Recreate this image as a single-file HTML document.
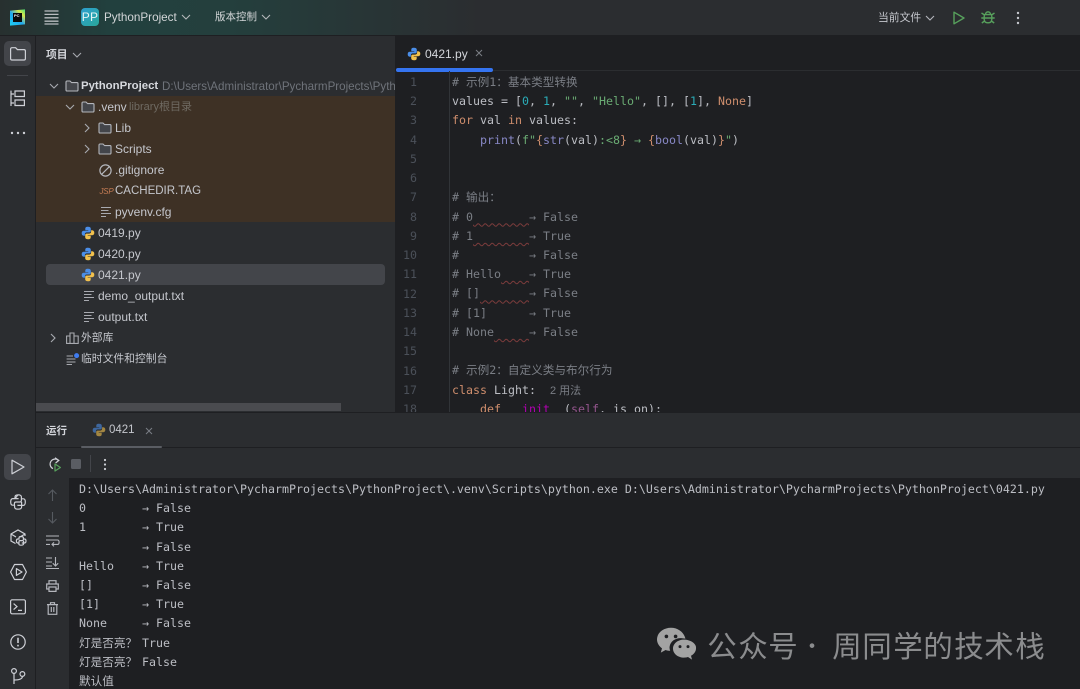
<!DOCTYPE html>
<html><head><meta charset="utf-8">
<style>
html,body{margin:0;padding:0;background:#1e1f22}
#r{position:relative;width:1080px;height:689px;overflow:hidden;background:#1e1f22;font-family:"Liberation Sans","Noto Sans CJK SC",sans-serif;font-size:12px;color:#c5c7cd;filter:blur(.3px)}
.a{position:absolute}
.t{position:absolute;white-space:pre;line-height:21px;height:21px}
svg{position:absolute;overflow:visible;fill:none}
.m{font-family:"DejaVu Sans Mono","Noto Sans CJK SC",monospace;font-size:11.63px;overflow:hidden}
.m div{white-space:pre}
.m i{display:inline-block;width:56px;font-style:normal}
#code div{height:19.23px;line-height:19.23px}
#con div{height:19.2px;line-height:19.2px}
.n{position:absolute;left:396px;width:21px;height:340px;overflow:hidden;text-align:right;color:#4b5059;font-family:"DejaVu Sans Mono",monospace;font-size:11.63px;line-height:19.23px}
.c{color:#7a7e85}.k{color:#cf8e6d}.d{color:#2aacb8}.s{color:#6aab73}.b{color:#8888c6}.x{color:#cf8e6d}
u{text-decoration:underline wavy #7d3c3c 1px;text-underline-offset:2px}
.st{stroke:#ced0d6;stroke-width:1.2}
.w{position:absolute;top:628px;font-size:29.5px;line-height:34px;color:#8b8c8e;font-family:"Noto Sans CJK SC",sans-serif;font-weight:400;width:30px;text-align:center}
</style></head><body>
<svg width="0" height="0" style="position:absolute"><defs>
<symbol id="py" viewBox="0 0 14 14"><path fill="#4b8ee8" d="M7 .8C4.6.8 4.3 1.7 4.3 2.8V4.2H7.3V4.8H2.8C1.4 4.8.7 5.8.7 7.2S1.4 9.7 2.8 9.7H3.9V8.2C3.9 7.1 4.8 6.4 5.7 6.4H8.4C9.2 6.4 9.8 5.8 9.8 5V2.8C9.8 1.6 8.8.8 7 .8Z"/><path fill="#f2c14e" d="M7 13.2C9.4 13.2 9.7 12.3 9.7 11.2V9.8H6.7V9.2H11.2C12.6 9.2 13.3 8.2 13.3 6.8S12.6 4.3 11.2 4.3H10.1V5.8C10.1 6.9 9.2 7.6 8.3 7.6H5.6C4.8 7.6 4.2 8.2 4.2 9V11.2C4.2 12.4 5.2 13.2 7 13.2Z"/></symbol>
<symbol id="fo" viewBox="0 0 14 14"><path stroke="#b4b6bc" stroke-width="1.1" fill="#43454a" d="M1 3.2C1 2.6 1.4 2 2 2H5L6.6 3.6H12C12.6 3.6 13 4 13 4.6V11C13 11.6 12.6 12 12 12H2C1.4 12 1 11.6 1 11Z"/></symbol>
<symbol id="tx" viewBox="0 0 14 14"><path stroke="#a8aab0" stroke-width="1.1" d="M2 2.5H12M2 5.5H9.5M2 8.5H12M2 11.5H7"/></symbol>
</defs></svg>
<div id="r">

<!-- top bar -->
<div class="a" style="left:0;top:0;width:1080px;height:35px;background:linear-gradient(90deg,#27302f 0,#22403e 110px,#243f3d 230px,#2b2d30 480px)"></div>
<div class="a" style="left:0;top:35px;width:1080px;height:1px;background:#1e1f22"></div>
<!-- logo -->
<div class="a" style="left:10px;top:10px;width:15px;height:15px;background:linear-gradient(45deg,#1fd0f0 0,#1fa8f0 45%,#d9e84a 75%,#3fe07a 100%);transform:skewY(-5deg)"></div>
<div class="a" style="left:13px;top:13px;width:9px;height:9px;background:#0a0a0a"></div>
<div class="a" style="left:14px;top:14px;font-size:4px;line-height:4px;color:#fff;font-weight:bold">PC</div>
<!-- menu -->
<svg style="left:44px;top:10px" width="15" height="15"><path stroke="#b9bcc0" stroke-width="1.3" d="M0.5 1H14.5M0.5 4.4H14.5M0.5 7.8H14.5M0.5 11.2H14.5M0.5 14H14.5"/></svg>
<div class="a" style="left:81px;top:8px;width:18px;height:18px;border-radius:4px;background:linear-gradient(135deg,#2d9fd0,#2aa89a);color:#e7f5f5;font-size:12px;line-height:18px;text-align:center;letter-spacing:.3px">PP</div>
<div class="t" style="left:104px;top:7px;color:#d3d6d8;font-size:11.7px">PythonProject</div>
<svg style="left:181px;top:14px" width="10" height="6"><path stroke="#b4b8ba" stroke-width="1.1" d="M1 1L5 5L9 1"/></svg>
<div class="t" style="left:215px;top:7px;color:#d3d6d8;font-size:10.5px">版本控制</div>
<svg style="left:261px;top:14px" width="10" height="6"><path stroke="#b4b8ba" stroke-width="1.1" d="M1 1L5 5L9 1"/></svg>
<div class="t" style="left:878px;top:8px;color:#c5c7cd;font-size:10.8px">当前文件</div>
<svg style="left:925px;top:15px" width="10" height="6"><path stroke="#b4b6bc" stroke-width="1.1" d="M1 1L5 5L9 1"/></svg>
<svg style="left:953px;top:11px" width="12" height="14"><path stroke="#57a05c" stroke-width="1.4" stroke-linejoin="round" d="M1 1.2L11 7L1 12.8Z"/></svg>
<svg style="left:981px;top:10px" width="14" height="15"><path stroke="#57a05c" stroke-width="1.4" d="M4.5 4.5C4.5 1 9.5 1 9.5 4.5M3.6 4.6H10.4C11 6 11 10 10.4 11C9.5 13.4 4.5 13.4 3.6 11C3 10 3 6 3.6 4.6ZM0.5 3L3.5 5M13.5 3L10.5 5M0.3 8H3M13.7 8H11M0.8 13L3.6 11M13.2 13L10.4 11M3 8H11"/></svg>
<svg style="left:1016px;top:11px" width="4" height="14"><circle cx="2" cy="2" r="1.2" fill="#c5c7cd"/><circle cx="2" cy="7" r="1.2" fill="#c5c7cd"/><circle cx="2" cy="12" r="1.2" fill="#c5c7cd"/></svg>

<!-- left strip -->
<div class="a" style="left:0;top:36px;width:36px;height:653px;background:#2b2d30"></div>
<div class="a" style="left:35px;top:36px;width:1px;height:653px;background:#1e1f22"></div>
<div class="a" style="left:4px;top:41px;width:27px;height:25px;border-radius:5px;background:#43454a"></div>
<svg class="st" style="left:10px;top:47px" width="16" height="14"><path d="M.6 2.2C.6 1.2 1.2.7 2 .7H5.6L7.4 2.6H14C14.9 2.6 15.4 3.2 15.4 4V11.6C15.4 12.5 14.9 13 14 13H2C1.2 13 .6 12.5.6 11.6Z"/></svg>
<div class="a" style="left:7px;top:75px;width:21px;height:1px;background:#43454a"></div>
<svg class="st" style="left:10px;top:90px" width="16" height="17"><path d="M1 .6V16M1 4H4M1 13H4M5 1H14.4V6.5H5ZM5 10H14.4V15.5H5Z"/></svg>
<svg style="left:10px;top:131px" width="16" height="4"><circle cx="2" cy="2" r="1.2" fill="#ced0d6"/><circle cx="8" cy="2" r="1.2" fill="#ced0d6"/><circle cx="14" cy="2" r="1.2" fill="#ced0d6"/></svg>

<div class="a" style="left:4px;top:454px;width:27px;height:26px;border-radius:5px;background:#43454a"></div>
<svg class="st" style="left:11px;top:459px" width="14" height="16"><path stroke-linejoin="round" d="M1 1.2L13 8L1 14.8Z"/></svg>
<svg class="st" style="left:10px;top:494px" width="16" height="16"><path d="M8 .8C5.6.8 5 1.7 5 3V4.6H8.6M5 4.6H2.6C1.3 4.6.7 6 .7 8S1.5 11.2 2.6 11.2H4.4V9.6C4.4 8.6 5 8 6 8H10C10.8 8 11.4 7.3 11.4 6.4V3C11.4 1.7 10.4.8 8 .8ZM11.4 4.8H13.4C14.7 4.8 15.3 6 15.3 8S14.5 11.4 13.4 11.4H7.4M11.6 8V13C11.6 14.3 10.4 15.2 8 15.2S4.6 14.3 4.6 13V11.2"/></svg>
<svg class="st" style="left:10px;top:529px" width="17" height="17"><path d="M5.5 14.5L1 12V5L8 1L15 5V7M1 5L6 8M15 5L10 8"/><path d="M11 7.5C9.4 7.5 9 8.2 9 9V10H7.8C6.8 10 6.4 10.8 6.4 12S7 14 7.8 14H9V12.6C9 12 9.5 11.6 10 11.6H12.4C13 11.6 13.4 11 13.4 10.4V9C13.4 8.2 12.6 7.5 11 7.5ZM13.4 10H14.4C15.4 10 16 10.8 16 12S15.4 14 14.4 14H11.8M13.6 12V14.6C13.6 15.6 12.6 16.2 11 16.2S8.8 15.6 8.8 14.6"/></svg>
<svg class="st" style="left:10px;top:563px" width="17" height="18"><path stroke-linejoin="round" d="M4.5 1.5H12.5L16.4 9L12.5 16.5H4.5L.6 9ZM6.4 5.6L12 9L6.4 12.4Z"/></svg>
<svg class="st" style="left:10px;top:599px" width="16" height="16"><rect x=".6" y=".8" width="14.8" height="14" rx="1.5"/><path d="M3.6 4.6L7 7.6L3.6 10.6M8 11.4H12"/></svg>
<svg class="st" style="left:10px;top:634px" width="16" height="16"><circle cx="8" cy="8" r="7.2"/><path stroke-width="1.6" d="M8 3.8V9M8 10.8V12.4"/></svg>
<svg class="st" style="left:10px;top:668px" width="16" height="17"><circle cx="4" cy="3" r="2.4"/><circle cx="12.4" cy="6" r="2.4"/><path d="M4 5.4V16M4 12C9 12 12.4 11 12.4 8.4"/></svg>

<!-- project panel -->
<div id="pp" class="a" style="left:36px;top:36px;width:359px;height:376px;background:#2b2d30;overflow:hidden"></div>
<div class="a" style="left:36px;top:96px;width:359px;height:126px;background:#3e3125"></div>
<div class="a" style="left:46px;top:264px;width:339px;height:21px;border-radius:4px;background:#43454a"></div>
<div class="t" style="left:46px;top:45px;font-size:10.8px;font-weight:bold;color:#d3d5da">项目</div>
<svg style="left:72px;top:52px" width="10" height="6"><path stroke="#a8aab0" stroke-width="1.1" d="M1 1L5 5L9 1"/></svg>

<svg style="left:49px;top:83px" width="10" height="6"><path stroke="#a8aab0" stroke-width="1.1" d="M1 1L5 5L9 1"/></svg>
<svg style="left:65px;top:79px" width="14" height="14"><use href="#fo"/></svg>
<div class="a" style="left:36px;top:76px;width:359px;height:21px;overflow:hidden"><div class="t" style="left:45px;top:0;font-weight:bold;color:#d7d9de;font-size:11.4px">PythonProject</div><div class="t" style="left:126px;top:0;color:#6f737a;font-size:11.6px">D:\Users\Administrator\PycharmProjects\PythonProject</div></div>

<svg style="left:65px;top:104px" width="10" height="6"><path stroke="#a8aab0" stroke-width="1.1" d="M1 1L5 5L9 1"/></svg>
<svg style="left:81px;top:100px" width="14" height="14"><use href="#fo"/></svg>
<div class="t" style="left:98px;top:97px;font-size:12px">.venv</div>
<div class="t" style="left:129px;top:97px;color:#6f6a62;font-size:11px">library根目录</div>

<svg style="left:84px;top:123px" width="6" height="10"><path stroke="#a8aab0" stroke-width="1.1" d="M1 1L5 5L1 9"/></svg>
<svg style="left:98px;top:121px" width="14" height="14"><use href="#fo"/></svg>
<div class="t" style="left:115px;top:118px;font-size:12px">Lib</div>
<svg style="left:84px;top:144px" width="6" height="10"><path stroke="#a8aab0" stroke-width="1.1" d="M1 1L5 5L1 9"/></svg>
<svg style="left:98px;top:142px" width="14" height="14"><use href="#fo"/></svg>
<div class="t" style="left:115px;top:139px;font-size:12px">Scripts</div>
<svg style="left:99px;top:164px" width="13" height="13"><circle cx="6.5" cy="6.5" r="5.6" stroke="#b4b6bc" stroke-width="1.2"/><path stroke="#b4b6bc" stroke-width="1.2" d="M2.8 10.2L10.2 2.8"/></svg>
<div class="t" style="left:115px;top:160px;font-size:12px">.gitignore</div>
<div class="t" style="left:99.5px;top:181px;font-size:8px;font-style:italic;color:#c77d55;letter-spacing:-.2px">JSP</div>
<div class="t" style="left:115px;top:181px;font-size:11.5px">CACHEDIR.TAG</div>
<svg style="left:99px;top:205px" width="14" height="14"><use href="#tx"/></svg>
<div class="t" style="left:115px;top:202px;font-size:12px">pyvenv.cfg</div>

<svg style="left:81px;top:226px" width="14" height="14"><use href="#py"/></svg>
<div class="t" style="left:98px;top:223px;font-size:12px">0419.py</div>
<svg style="left:81px;top:247px" width="14" height="14"><use href="#py"/></svg>
<div class="t" style="left:98px;top:244px;font-size:12px">0420.py</div>
<svg style="left:81px;top:268px" width="14" height="14"><use href="#py"/></svg>
<div class="t" style="left:98px;top:265px;font-size:12px">0421.py</div>
<svg style="left:82px;top:289px" width="14" height="14"><use href="#tx"/></svg>
<div class="t" style="left:98px;top:286px;font-size:12px">demo_output.txt</div>
<svg style="left:82px;top:310px" width="14" height="14"><use href="#tx"/></svg>
<div class="t" style="left:98px;top:307px;font-size:12px">output.txt</div>
<svg style="left:50px;top:333px" width="6" height="10"><path stroke="#a8aab0" stroke-width="1.1" d="M1 1L5 5L1 9"/></svg>
<svg style="left:66px;top:332px" width="13" height="12"><path stroke="#a8aab0" stroke-width="1.1" d="M.6 4H4V11.4H.6ZM4 1H8V11.4H4ZM8 4H12.2V11.4H8Z"/></svg>
<div class="t" style="left:81px;top:328px;font-size:10.8px">外部库</div>
<svg style="left:66px;top:353px" width="14" height="12"><path stroke="#a8aab0" stroke-width="1.1" d="M.6 3H7M.6 6H9.5M.6 9H9.5M.6 11.5H6"/><circle cx="10.6" cy="2.6" r="2.5" fill="#3f7cf0"/></svg>
<div class="t" style="left:81px;top:349px;font-size:10.8px">临时文件和控制台</div>
<div class="a" style="left:36px;top:403px;width:305px;height:8px;background:#4a4b4f"></div>

<!-- editor -->
<div class="a" style="left:395px;top:36px;width:1px;height:376px;background:#1e1f22"></div>
<div class="a" style="left:396px;top:36px;width:684px;height:34px;background:#1e1f22"></div>
<div class="a" style="left:396px;top:70px;width:684px;height:1px;background:#2b2d30"></div>
<svg style="left:407px;top:47px" width="14" height="14"><use href="#py"/></svg>
<div class="t" style="left:425px;top:44px;font-size:12px;color:#d3d5da">0421.py</div>
<svg style="left:475px;top:49px" width="8" height="8"><path stroke="#7a7e85" stroke-width="1" d="M1 1L7 7M7 1L1 7"/></svg>
<div class="a" style="left:396px;top:68px;width:97px;height:4px;border-radius:2px;background:#3574f0"></div>
<div class="a" style="left:449px;top:71px;width:1px;height:341px;background:#313438"></div>

<div class="n" style="top:73px">1<br>2<br>3<br>4<br>5<br>6<br>7<br>8<br>9<br>10<br>11<br>12<br>13<br>14<br>15<br>16<br>17<br>18</div>

<div id="code" class="a m" style="left:452px;top:73px;width:628px;height:339px;color:#bcbec4">
<div class="c"># 示例1：基本类型转换</div>
<div>values = [<span class="d">0</span>, <span class="d">1</span>, <span class="s">""</span>, <span class="s">"Hello"</span>, [], [<span class="d">1</span>], <span class="x">None</span>]</div>
<div><span class="k">for</span> val <span class="k">in</span> values:</div>
<div>    <span class="b">print</span>(<span class="s">f"</span><span class="k">{</span><span class="b">str</span>(val)<span class="s">:&lt;8</span><span class="k">}</span><span class="s"> → </span><span class="k">{</span><span class="b">bool</span>(val)<span class="k">}</span><span class="s">"</span>)</div>
<div> </div>
<div> </div>
<div class="c"># 输出：</div>
<div class="c"># 0<u>        </u>→ False</div>
<div class="c"># 1<u>        </u>→ True</div>
<div class="c">#          → False</div>
<div class="c"># Hello<u>    </u>→ True</div>
<div class="c"># []<u>       </u>→ False</div>
<div class="c"># [1]      → True</div>
<div class="c"># None<u>     </u>→ False</div>
<div> </div>
<div class="c"># 示例2：自定义类与布尔行为</div>
<div><span class="k">class</span> Light:  <span style="color:#7a7e85;font-family:'Liberation Sans','Noto Sans CJK SC',sans-serif;font-size:11px">2 用法</span></div>
<div>    <span class="k">def</span> <span style="color:#b200b2">__init__</span>(<span style="color:#94558d">self</span>, is_on):</div>
</div>

<!-- run panel -->
<div class="a" style="left:36px;top:412px;width:1044px;height:66px;background:#2b2d30"></div>
<div class="a" style="left:36px;top:412px;width:1044px;height:1px;background:#1e1f22"></div>
<div class="a" style="left:36px;top:447px;width:1044px;height:1px;background:#1e1f22"></div>
<div class="a" style="left:36px;top:478px;width:33px;height:211px;background:#2b2d30"></div>
<div class="t" style="left:46px;top:421px;font-size:10.5px;font-weight:bold;color:#d3d5da">运行</div>
<svg style="left:92px;top:423px;opacity:.6" width="14" height="14"><use href="#py"/></svg>
<div class="t" style="left:109px;top:420px;font-size:11.5px;color:#c5c7cd">0421</div>
<svg style="left:145px;top:427px" width="8" height="8"><path stroke="#7a7e85" stroke-width="1" d="M1 1L7 7M7 1L1 7"/></svg>
<div class="a" style="left:81px;top:446px;width:81px;height:2px;border-radius:1px;background:#5a5d63"></div>

<svg style="left:47px;top:457px" width="14" height="15"><path stroke="#ced0d6" stroke-width="1.2" d="M11.5 3.4A5 5 0 1 0 6 11.6M8 .8L11.8 3.4L8.6 6"/><path stroke="#57a05c" stroke-width="1.2" stroke-linejoin="round" d="M8 7L13.4 10.5L8 14Z"/></svg>
<div class="a" style="left:71px;top:459px;width:10px;height:10px;border-radius:1.5px;background:#5a5d63"></div>
<div class="a" style="left:90px;top:455px;width:1px;height:17px;background:#43454a"></div>
<svg style="left:103px;top:458px" width="4" height="13"><circle cx="2" cy="2" r="1.1" fill="#ced0d6"/><circle cx="2" cy="6.5" r="1.1" fill="#ced0d6"/><circle cx="2" cy="11" r="1.1" fill="#ced0d6"/></svg>

<svg style="left:47px;top:489px" width="11" height="12"><path stroke="#565a60" stroke-width="1.1" d="M5.5 12V1M1.5 5L5.5 1L9.5 5"/></svg>
<svg style="left:47px;top:512px" width="11" height="12"><path stroke="#565a60" stroke-width="1.1" d="M5.5 0V11M1.5 7L5.5 11L9.5 7"/></svg>
<svg style="left:46px;top:535px" width="13" height="12"><path stroke="#b4b6bc" stroke-width="1.1" d="M0 1H13M0 5H11.5C13.6 5 13.6 9.4 11.5 9.4H6M8 7.4L6 9.4L8 11.4M0 9.4H4"/></svg>
<svg style="left:46px;top:557px" width="13" height="12"><path stroke="#b4b6bc" stroke-width="1.1" d="M0 1H6M0 5H6M0 9H6M0 11.5H13M9.5 0V8.8M6.8 6.2L9.5 9L12.2 6.2"/></svg>
<svg style="left:46px;top:580px" width="13" height="12"><path stroke="#b4b6bc" stroke-width="1.2" d="M3 4V.7H10V4M3 9H.7V4H12.3V9H10M3 7H10V11.4H3Z"/></svg>
<svg style="left:47px;top:602px" width="11" height="13"><path stroke="#b4b6bc" stroke-width="1.2" d="M0 2.6H11M3.5 2.6V.7H7.5V2.6M1.2 2.6V12.3H9.8V2.6M4.3 5V10M6.8 5V10"/></svg>

<div id="con" class="a m" style="left:79px;top:480px;width:1000px;height:209px;color:#bcbec4">
<div>D:\Users\Administrator\PycharmProjects\PythonProject\.venv\Scripts\python.exe D:\Users\Administrator\PycharmProjects\PythonProject\0421.py</div>
<div>0        → False</div>
<div>1        → True</div>
<div>         → False</div>
<div>Hello    → True</div>
<div>[]       → False</div>
<div>[1]      → True</div>
<div>None     → False</div>
<div><i>灯是否亮？</i> True</div>
<div><i>灯是否亮？</i> False</div>
<div>默认值</div>
</div>

<!-- watermark -->
<svg style="left:656px;top:627px" width="43" height="35"><path fill="#a3a3a3" d="M15 .8C7.2.8 1 6 1 12.4C1 16 3 19.2 6 21.4L4.8 25.6L9.6 23C11 23.5 12.6 23.8 14.2 23.8C13.6 22.4 13.4 21 13.6 19.6C14.4 14 20 10.6 26 11.2L29.4 11.6C28 5.4 22 .8 15 .8Z"/><path fill="#a3a3a3" d="M28 12.6C21.8 12.6 17 16.6 17 21.6S21.8 30.6 28 30.6C29.4 30.6 30.8 30.4 32 30L36 32.6L35 28.8C38 27 40 24.4 40 21.6C41 16.6 34.2 12.6 28 12.6Z"/><circle cx="10.4" cy="9.4" r="1.8" fill="#1e1f22"/><circle cx="19.6" cy="9.4" r="1.8" fill="#1e1f22"/><circle cx="24" cy="19.6" r="1.5" fill="#1e1f22"/><circle cx="32" cy="19.6" r="1.5" fill="#1e1f22"/></svg>
<div class="w" style="left:707px">公</div><div class="w" style="left:738px">众</div><div class="w" style="left:768px">号</div>
<div class="w" style="left:797px;font-size:22px">·</div>
<div class="w" style="left:832px">周</div><div class="w" style="left:862px">同</div><div class="w" style="left:893px">学</div><div class="w" style="left:923px">的</div><div class="w" style="left:954px">技</div><div class="w" style="left:984px">术</div><div class="w" style="left:1015px">栈</div>

</div>
</body></html>
